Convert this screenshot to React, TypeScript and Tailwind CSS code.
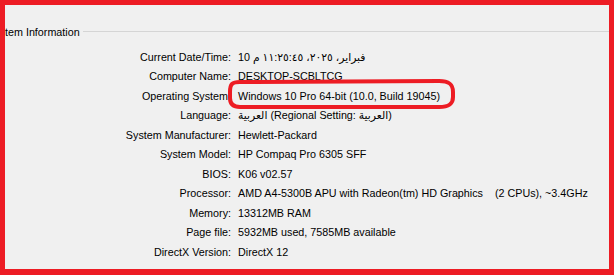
import React from "react";

const rows: [string, string][] = [
  ["Current Date/Time:", "10 فبراير، ٢٠٢٥، ١١:٢٥:٤٥ م"],
  ["Computer Name:", "DESKTOP-SCBLTCG"],
  ["Operating System:", "Windows 10 Pro 64-bit (10.0, Build 19045)"],
  ["Language:", "العربية (Regional Setting: العربية)"],
  ["System Manufacturer:", "Hewlett-Packard"],
  ["System Model:", "HP Compaq Pro 6305 SFF"],
  ["BIOS:", "K06 v02.57"],
  ["Processor:", "AMD A4-5300B APU with Radeon(tm) HD Graphics    (2 CPUs), ~3.4GHz"],
  ["Memory:", "13312MB RAM"],
  ["Page file:", "5932MB used, 7585MB available"],
  ["DirectX Version:", "DirectX 12"],
];

export default function App() {
  return (
    <div
      className="relative w-[614px] h-[275px] overflow-hidden border-t-[5px] border-l-[5px] border-r-[5px] border-b-[6px] border-[#ed1c24] bg-[#f0f0f0] text-black text-[10.75px]"
      style={{ fontFamily: '"Liberation Sans", "DejaVu Sans", sans-serif' }}
    >
      <div className="flex items-center h-[14px] mt-[20px]">
        <span className="leading-none whitespace-nowrap">tem Information</span>
        <div className="flex-1 h-px bg-[#d5d5d5] ml-[3px] -mt-[2px]" />
      </div>
      <div className="mt-[8px] flex flex-col">
        {rows.map(([label, value]) => (
          <div key={label} className="flex items-center h-[19.5px]">
            <div className="w-[226px] text-right whitespace-nowrap">{label}</div>
            <div className="ml-[7px] whitespace-pre">{value}</div>
          </div>
        ))}
      </div>
      <svg
        className="absolute left-[221px] top-[73px]"
        width="232"
        height="32"
        viewBox="0 0 232 32"
      >
        <path
          d="M4 14 C4 6 6 4 14 4 L213 3 C223 3 227 6 227 14 L227 19 C227 26 223 29 213 29 L14 29 C7 29 4 26 4 20 Z"
          fill="none"
          stroke="#ed1c24"
          strokeWidth="4"
        />
      </svg>
    </div>
  );
}
